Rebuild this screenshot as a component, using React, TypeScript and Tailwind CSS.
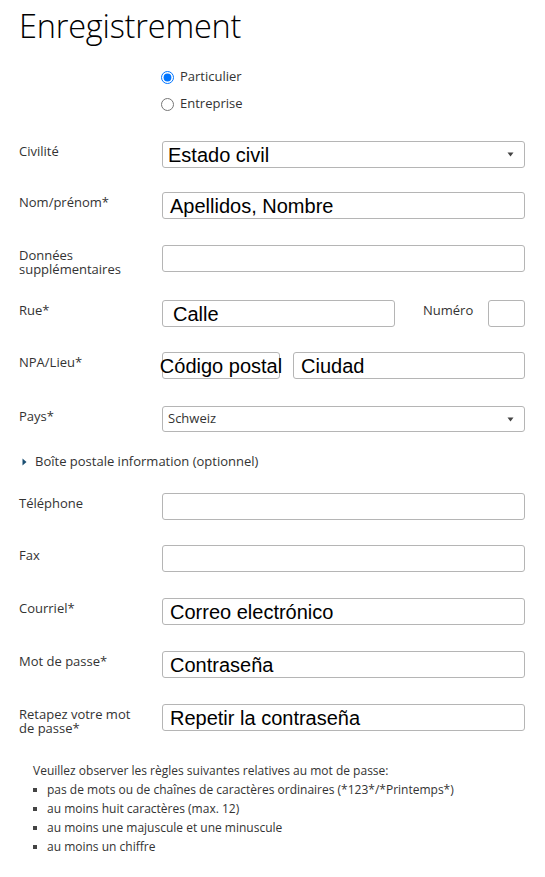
import React from "react";

const boxCls =
  "h-[27px] border border-[#b5b5b5] rounded-[3px] bg-white flex items-center whitespace-nowrap text-black text-[20px] leading-none [font-family:'Liberation_Sans',Arial,sans-serif]";

const Label = ({ children }: { children: React.ReactNode }) => (
  <div className="w-[143px] shrink-0 pt-[3px] text-[13px] leading-[14px] text-[#333]">
    {children}
  </div>
);

const Field = ({ text, pl = "pl-[7px]" }: { text?: string; pl?: string }) => (
  <div className={`${boxCls} flex-1 ${pl}`}>{text}</div>
);

const Arrow = () => (
  <svg width="7" height="5" viewBox="0 0 7 5" className="mr-[10px]">
    <path d="M0.5 0.5 L6.5 0.5 L3.5 4.5 Z" fill="#444" />
  </svg>
);

const Row = ({
  label,
  children,
  mb = "mb-[26px]",
}: {
  label: React.ReactNode;
  children: React.ReactNode;
  mb?: string;
}) => (
  <div className={`flex items-start h-[27px] ${mb}`}>
    <Label>{label}</Label>
    <div className="flex-1 flex items-start">{children}</div>
  </div>
);

const rules = [
  "pas de mots ou de chaînes de caractères ordinaires (*123*/*Printemps*)",
  "au moins huit caractères (max. 12)",
  "au moins une majuscule et une minuscule",
  "au moins un chiffre",
];

const App = () => {
  return (
    <div className="w-[545px] min-h-[877px] bg-white pl-[19px] pr-[20px] pt-[6px] [font-family:'Open_Sans',sans-serif]">
      <h1 className="text-[32.5px] leading-[40px] font-light text-black tracking-[-0.2px]">
        Enregistrement
      </h1>

      <div className="ml-[142px] mt-[23px] flex flex-col gap-[11px] text-[13px] text-[#333]">
        <label className="flex items-center h-[16px]">
          <input type="radio" name="type" defaultChecked className="w-[13px] h-[13px] m-0 mr-[6px] accent-[#0075ff]" />
          Particulier
        </label>
        <label className="flex items-center h-[16px]">
          <input type="radio" name="type" className="w-[13px] h-[13px] m-0 mr-[6px]" />
          Entreprise
        </label>
      </div>

      <div className="mt-[29px]">
        <Row label="Civilité" mb="mb-[24px]">
          <div className={`${boxCls} flex-1 h-[26px] pl-[5px] justify-between`}>
            <span>Estado civil</span>
            <Arrow />
          </div>
        </Row>
        <Row label="Nom/prénom*">
          <Field text="Apellidos, Nombre" />
        </Row>
        <Row label={<>Données<br />supplémentaires</>} mb="mb-[28px]">
          <Field />
        </Row>
        <Row label="Rue*" mb="mb-[25px]">
          <div className={`${boxCls} w-[233px] pl-[10px]`}>Calle</div>
          <div className="w-[93px] pt-[3px] pl-[28px] text-[13px] leading-[14px] text-[#333] [font-family:'Open_Sans',sans-serif]">
            Numéro
          </div>
          <div className={`${boxCls} flex-1`} />
        </Row>
        <Row label="NPA/Lieu*" mb="mb-[27px]">
          <div className={`${boxCls} w-[118px] justify-center overflow-visible`}>Código postal</div>
          <div className={`${boxCls} flex-1 ml-[13px] pl-[7px]`}>Ciudad</div>
        </Row>
        <Row label="Pays*" mb="mb-[19px]">
          <div className="h-[26px] flex-1 border border-[#b5b5b5] rounded-[3px] flex items-center justify-between pl-[5px] text-[13px] text-[#333]">
            <span>Schweiz</span>
            <Arrow />
          </div>
        </Row>

        <div className="flex items-center h-[20px] mb-[21px] text-[13px] text-[#333]">
          <svg width="5" height="8" viewBox="0 0 5 8" className="ml-[3px] mr-[8px]">
            <path d="M0.5 0.5 L4.5 4 L0.5 7.5 Z" fill="#1b4f72" />
          </svg>
          Boîte postale information (optionnel)
        </div>

        <Row label="Téléphone" mb="mb-[25px]">
          <Field />
        </Row>
        <Row label="Fax">
          <Field />
        </Row>
        <Row label="Courriel*">
          <Field text="Correo electrónico" />
        </Row>
        <Row label="Mot de passe*">
          <Field text="Contraseña" />
        </Row>
        <Row label={<>Retapez votre mot<br />de passe*</>} mb="mb-[30px]">
          <Field text="Repetir la contraseña" />
        </Row>
      </div>

      <div className="text-[12px] leading-[19px] text-[#333] pb-[20px]">
        <p className="pl-[14px]">Veuillez observer les règles suivantes relatives au mot de passe:</p>
        <ul>
          {rules.map((r) => (
            <li key={r} className="flex items-center">
              <span className="w-[4px] h-[4px] bg-[#444] ml-[14px] mr-[10px] shrink-0" />
              {r}
            </li>
          ))}
        </ul>
      </div>
    </div>
  );
};

export default App;
